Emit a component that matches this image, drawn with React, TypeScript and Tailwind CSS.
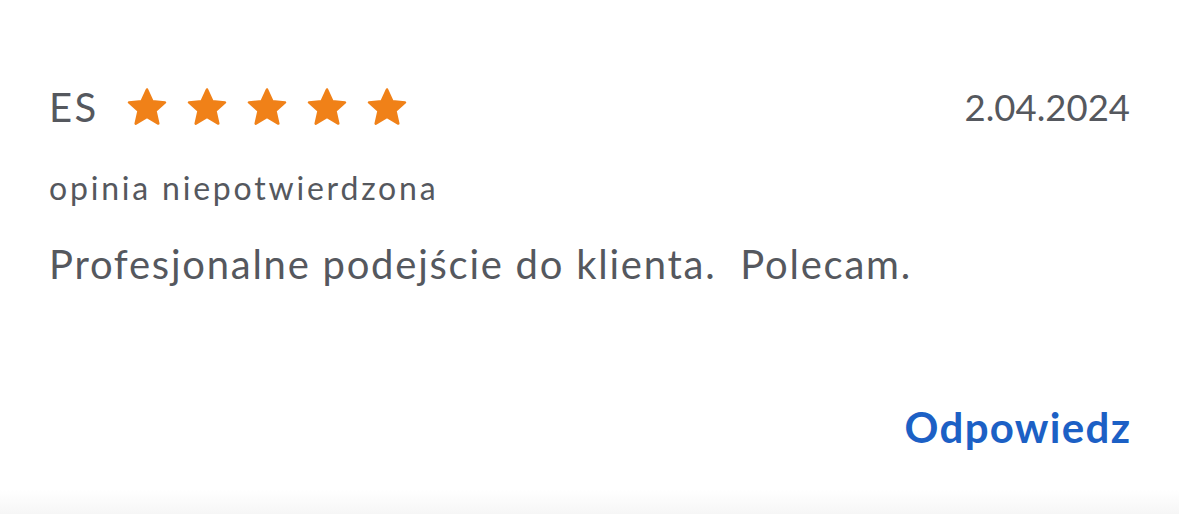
export default function App() {
  const Star = () => (
    <svg width="42" height="40" viewBox="0 0 42 40" className="shrink-0">
      <path
        d="M21 2.5 L26.4 14.2 L39 15.4 L29.5 23.9 L32.3 36.6 L21 30 L9.7 36.6 L12.5 23.9 L3 15.4 L15.6 14.2 Z"
        fill="#f08118"
        stroke="#f08118"
        strokeWidth="2.5"
        strokeLinejoin="round"
      />
    </svg>
  )

  return (
    <div
      className="w-[1179px] h-[514px] bg-white flex flex-col text-[#55585e]"
      style={{ fontFamily: "Lato, 'Open Sans', sans-serif" }}
    >
      <div className="flex-1 flex flex-col px-[49px] pt-[84px]">
        <div className="flex items-center justify-between h-[46px]">
          <div className="flex items-center gap-[27px]">
            <span className="text-[40px] leading-none tracking-[2.5px]">ES</span>
            <div className="flex items-center gap-[18px]">
              <Star />
              <Star />
              <Star />
              <Star />
              <Star />
            </div>
          </div>
          <span className="text-[36.5px] leading-none">2.04.2024</span>
        </div>
        <p className="mt-[42px] text-[32px] leading-none tracking-[2.8px]">opinia niepotwierdzona</p>
        <p className="mt-[40px] text-[40px] leading-none tracking-[1.75px] whitespace-pre">
          Profesjonalne podejście do klienta.  Polecam.
        </p>
        <div className="flex justify-end mt-[122px]">
          <button className="text-[42px] font-bold leading-none tracking-[1.3px] -mr-[1.3px] text-[#1c60c5]">
            Odpowiedz
          </button>
        </div>
      </div>
      <div className="h-[24px] bg-gradient-to-b from-white to-[#f6f6f6]" />
    </div>
  )
}
